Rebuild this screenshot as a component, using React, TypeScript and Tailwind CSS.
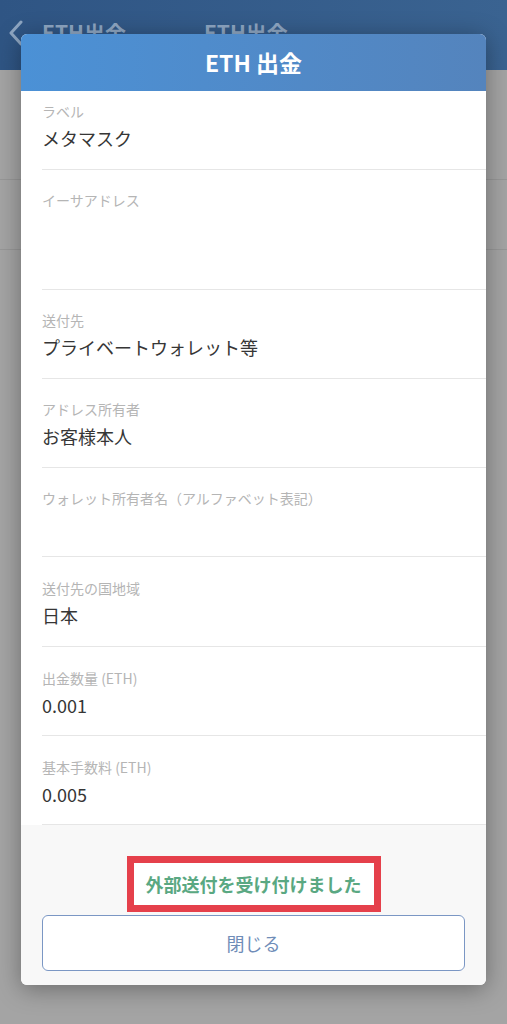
import React from 'react';

const rows: { label: string; value: string; h: string }[] = [
  { label: 'ラベル', value: 'メタマスク', h: 'h-[79px] pt-[10px]' },
  { label: 'イーサアドレス', value: '', h: 'h-[120px] pt-[20px]' },
  { label: '送付先', value: 'プライベートウォレット等', h: 'h-[89px] pt-[20px]' },
  { label: 'アドレス所有者', value: 'お客様本人', h: 'h-[89px] pt-[20px]' },
  { label: 'ウォレット所有者名（アルファベット表記）', value: '', h: 'h-[89px] pt-[20px]' },
  { label: '送付先の国地域', value: '日本', h: 'h-[90px] pt-[21px]' },
  { label: '出金数量 (ETH)', value: '0.001', h: 'h-[89px] pt-[21px]' },
  { label: '基本手数料 (ETH)', value: '0.005', h: 'h-[89px] pt-[21px]' },
];

function Row({ label, value, h }: { label: string; value: string; h: string }) {
  return (
    <div className={`ml-[21px] border-b border-[#e6e6e6] ${h}`}>
      <div className="text-[14px] leading-[20px] text-[#b5b5b5]">{label}</div>
      {value && <div className="mt-[4px] text-[18px] leading-[26px] text-[#363636]">{value}</div>}
    </div>
  );
}

export default function App() {
  return (
    <div
      className="relative h-[1024px] w-[507px] overflow-hidden bg-[#a4a4a4]"
      style={{ fontFamily: '"Noto Sans CJK JP", "Noto Sans", sans-serif' }}
    >
      {/* dimmed page behind the dialog */}
      <div className="flex h-[70px] items-center bg-gradient-to-r from-[#2f5584] to-[#3a6391] pb-[4px] text-[21px] font-bold text-[#8ea6c2]">
        <svg width="16" height="26" viewBox="0 0 16 26" className="ml-[8px]">
          <path d="M13 2 L3 13 L13 24" fill="none" stroke="#8ea6c2" strokeWidth="3" strokeLinecap="round" strokeLinejoin="round" />
        </svg>
        <span className="ml-[18px]">ETH出金</span>
        <span className="ml-[78px]">ETH出金</span>
      </div>
      <div className="h-[110px] border-b border-[#979797]" />
      <div className="h-[70px] border-b border-[#979797]" />

      {/* dialog */}
      <div className="absolute left-[21px] top-[34px] w-[465px] overflow-hidden rounded-[6px] bg-white shadow-[0_4px_24px_rgba(0,0,0,0.35)]">
        <div className="flex h-[57px] items-center justify-center bg-gradient-to-r from-[#4b91d6] to-[#5484bd] text-[23px] font-bold text-white">
          ETH 出金
        </div>
        <div className="bg-white">
          {rows.map((r) => (
            <Row key={r.label} {...r} />
          ))}
        </div>
        <div className="flex flex-col items-center bg-[#f8f8f8] px-[21px] pb-[14px] pt-[31px]">
          <div className="border-[7px] border-[#e5404b] bg-white px-[12px] py-[8px] text-[18px] font-bold leading-[26px] text-[#5aa882]">
            外部送付を受け付けました
          </div>
          <button className="mt-[3px] flex h-[56px] w-full items-center justify-center rounded-[6px] border border-[#7b97c4] bg-white text-[18px] text-[#6f8db8]">
            閉じる
          </button>
        </div>
      </div>
    </div>
  );
}
